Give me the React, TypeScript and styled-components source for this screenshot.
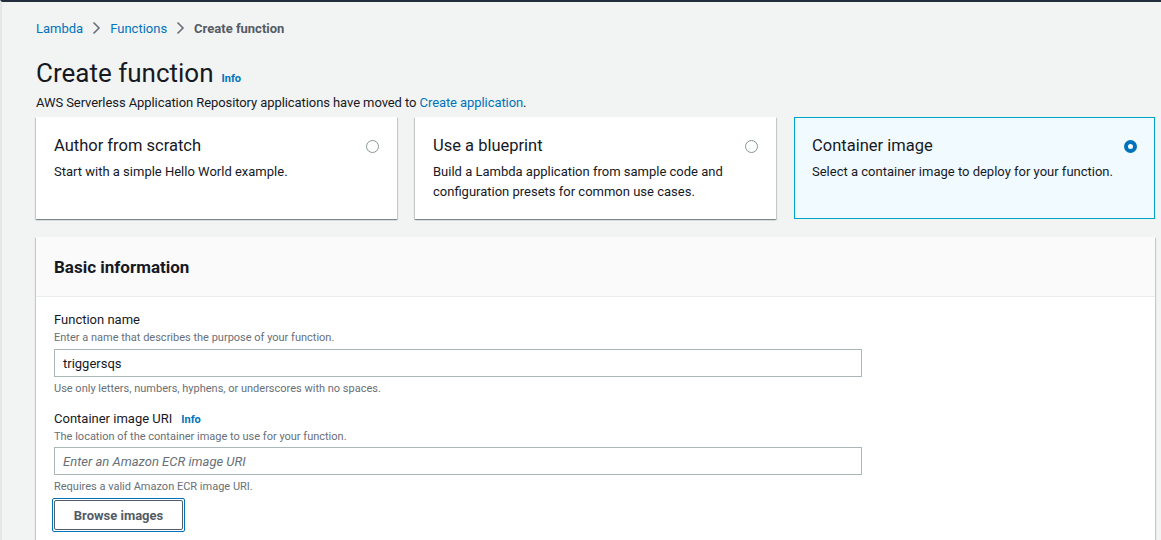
import React from "react";
import styled, { createGlobalStyle } from "styled-components";

const GlobalStyle = createGlobalStyle`
  html, body { margin: 0; padding: 0; }
  body {
    background: #f2f3f3;
    font-family: Roboto, "Liberation Sans", Arial, sans-serif;
    color: #16191f;
  }
  * { box-sizing: border-box; }
`;

const Page = styled.div`
  min-height: 540px;
  border-top: 2px solid #232f3e;
  border-left: 2px solid #e4e7e7;
  padding: 16px 6px 0 34px;
`;

const Crumbs = styled.nav`
  display: flex;
  align-items: center;
  gap: 9px;
  height: 20px;
  font-size: 13px;
`;

const CrumbLink = styled.a`
  color: #0073bb;
  text-decoration: none;
`;

const CrumbCurrent = styled.span`
  color: #545b64;
  font-weight: 700;
`;

const Chevron = () => (
  <svg width="9" height="14" viewBox="0 0 9 14" fill="none">
    <path d="M1.5 1.5 L7 7 L1.5 12.5" stroke="#687078" strokeWidth="1.6" />
  </svg>
);

const TitleRow = styled.div`
  display: flex;
  align-items: baseline;
  gap: 8px;
  margin-top: 18px;
`;

const H1 = styled.h1`
  margin: 0;
  font-size: 26px;
  font-weight: 400;
  line-height: 34px;
  color: #16191f;
`;

const InfoLink = styled.a`
  color: #0073bb;
  font-size: 11px;
  font-weight: 700;
  text-decoration: none;
`;

const Subtitle = styled.p`
  margin: 3px 0 0;
  font-size: 13px;
  line-height: 20px;
  letter-spacing: -0.08px;
  color: #16191f;
`;

const Cards = styled.div`
  display: grid;
  grid-template-columns: repeat(3, 1fr);
  gap: 18px;
  margin-top: 4px;
`;

const Card = styled.label<{ $selected?: boolean }>`
  position: relative;
  display: flex;
  justify-content: space-between;
  align-items: flex-start;
  height: 102px;
  padding: 17px 17px 0 17px;
  background: ${(p) => (p.$selected ? "#f1faff" : "#ffffff")};
  border: 1px solid ${(p) => (p.$selected ? "#00a1c9" : "transparent")};
  box-shadow: ${(p) =>
    p.$selected ? "none" : "0 1px 1px 0 rgba(0,28,36,0.3), 1px 1px 1px 0 rgba(0,28,36,0.15), -1px 1px 1px 0 rgba(0,28,36,0.15)"};
`;

const CardText = styled.div`
  display: flex;
  flex-direction: column;
  gap: 5px;
`;

const CardTitle = styled.div`
  font-size: 16.5px;
  line-height: 22px;
  color: #16191f;
`;

const CardDesc = styled.div`
  font-size: 13px;
  line-height: 20px;
  color: #16191f;
`;

const Radio = styled.span<{ $checked?: boolean }>`
  flex: none;
  width: 13px;
  height: 13px;
  margin-top: 5px;
  border-radius: 50%;
  border: ${(p) => (p.$checked ? "4px solid #0073bb" : "1px solid #879596")};
  background: #fff;
`;

const Panel = styled.section`
  margin-top: 18px;
  background: #fff;
  box-shadow: 0 1px 1px 0 rgba(0,28,36,0.3), 1px 1px 1px 0 rgba(0,28,36,0.15), -1px 1px 1px 0 rgba(0,28,36,0.15);
`;

const PanelHeader = styled.header`
  display: flex;
  align-items: center;
  height: 60px;
  padding: 0 18px;
  background: #fafafa;
  border-bottom: 1px solid #eaeded;
`;

const PanelTitle = styled.h2`
  margin: 0;
  font-size: 17px;
  font-weight: 700;
  color: #16191f;
`;

const PanelBody = styled.div`
  padding: 13px 18px 20px;
  display: flex;
  flex-direction: column;
  gap: 12px;
`;

const Field = styled.div`
  display: flex;
  flex-direction: column;
`;

const LabelRow = styled.div`
  display: flex;
  align-items: baseline;
  gap: 9px;
`;

const Label = styled.span`
  font-size: 13px;
  line-height: 20px;
  color: #16191f;
`;

const Description = styled.span`
  font-size: 11px;
  line-height: 16px;
  color: #687078;
`;

const Constraint = styled.span<{ $gap: number }>`
  font-size: 11px;
  line-height: 16px;
  color: #687078;
  margin-top: ${(p) => p.$gap}px;
`;

const Input = styled.input<{ $gap: number }>`
  width: 808px;
  height: 28px;
  margin-top: ${(p) => p.$gap}px;
  padding: 0 8px;
  border: 1px solid #aab7b8;
  border-radius: 0;
  background: #fff;
  font-family: inherit;
  font-size: 13px;
  color: #16191f;
  outline: none;
  &::placeholder {
    color: #687078;
    font-style: italic;
  }
`;

const FocusRing = styled.div`
  align-self: flex-start;
  margin: 3px 0 0 -2px;
  padding: 1px;
  border: 1px solid #0073bb;
  border-radius: 2px;
`;

const Button = styled.button`
  display: block;
  width: 129px;
  height: 30px;
  border: 1px solid #545b64;
  border-radius: 2px;
  background: #fff;
  font-family: inherit;
  font-size: 13px;
  font-weight: 700;
  color: #545b64;
`;

export default function App() {
  return (
    <>
      <GlobalStyle />
      <Page>
        <Crumbs>
          <CrumbLink href="#">Lambda</CrumbLink>
          <Chevron />
          <CrumbLink href="#">Functions</CrumbLink>
          <Chevron />
          <CrumbCurrent>Create function</CrumbCurrent>
        </Crumbs>
        <TitleRow>
          <H1>Create function</H1>
          <InfoLink href="#">Info</InfoLink>
        </TitleRow>
        <Subtitle>
          AWS Serverless Application Repository applications have moved to{" "}
          <CrumbLink href="#">Create application</CrumbLink>.
        </Subtitle>
        <Cards>
          <Card>
            <CardText>
              <CardTitle>Author from scratch</CardTitle>
              <CardDesc>Start with a simple Hello World example.</CardDesc>
            </CardText>
            <Radio />
          </Card>
          <Card>
            <CardText>
              <CardTitle>Use a blueprint</CardTitle>
              <CardDesc>
                Build a Lambda application from sample code and
                <br />
                configuration presets for common use cases.
              </CardDesc>
            </CardText>
            <Radio />
          </Card>
          <Card $selected>
            <CardText>
              <CardTitle>Container image</CardTitle>
              <CardDesc>Select a container image to deploy for your function.</CardDesc>
            </CardText>
            <Radio $checked />
          </Card>
        </Cards>
        <Panel>
          <PanelHeader>
            <PanelTitle>Basic information</PanelTitle>
          </PanelHeader>
          <PanelBody>
            <Field>
              <Label>Function name</Label>
              <Description>Enter a name that describes the purpose of your function.</Description>
              <Input $gap={3} defaultValue="triggersqs" />
              <Constraint $gap={4}>Use only letters, numbers, hyphens, or underscores with no spaces.</Constraint>
            </Field>
            <Field>
              <LabelRow>
                <Label>Container image URI</Label>
                <InfoLink href="#">Info</InfoLink>
              </LabelRow>
              <Description>The location of the container image to use for your function.</Description>
              <Input $gap={2} placeholder="Enter an Amazon ECR image URI" />
              <Constraint $gap={4}>Requires a valid Amazon ECR image URI.</Constraint>
              <FocusRing>
                <Button>Browse images</Button>
              </FocusRing>
            </Field>
          </PanelBody>
        </Panel>
      </Page>
    </>
  );
}
